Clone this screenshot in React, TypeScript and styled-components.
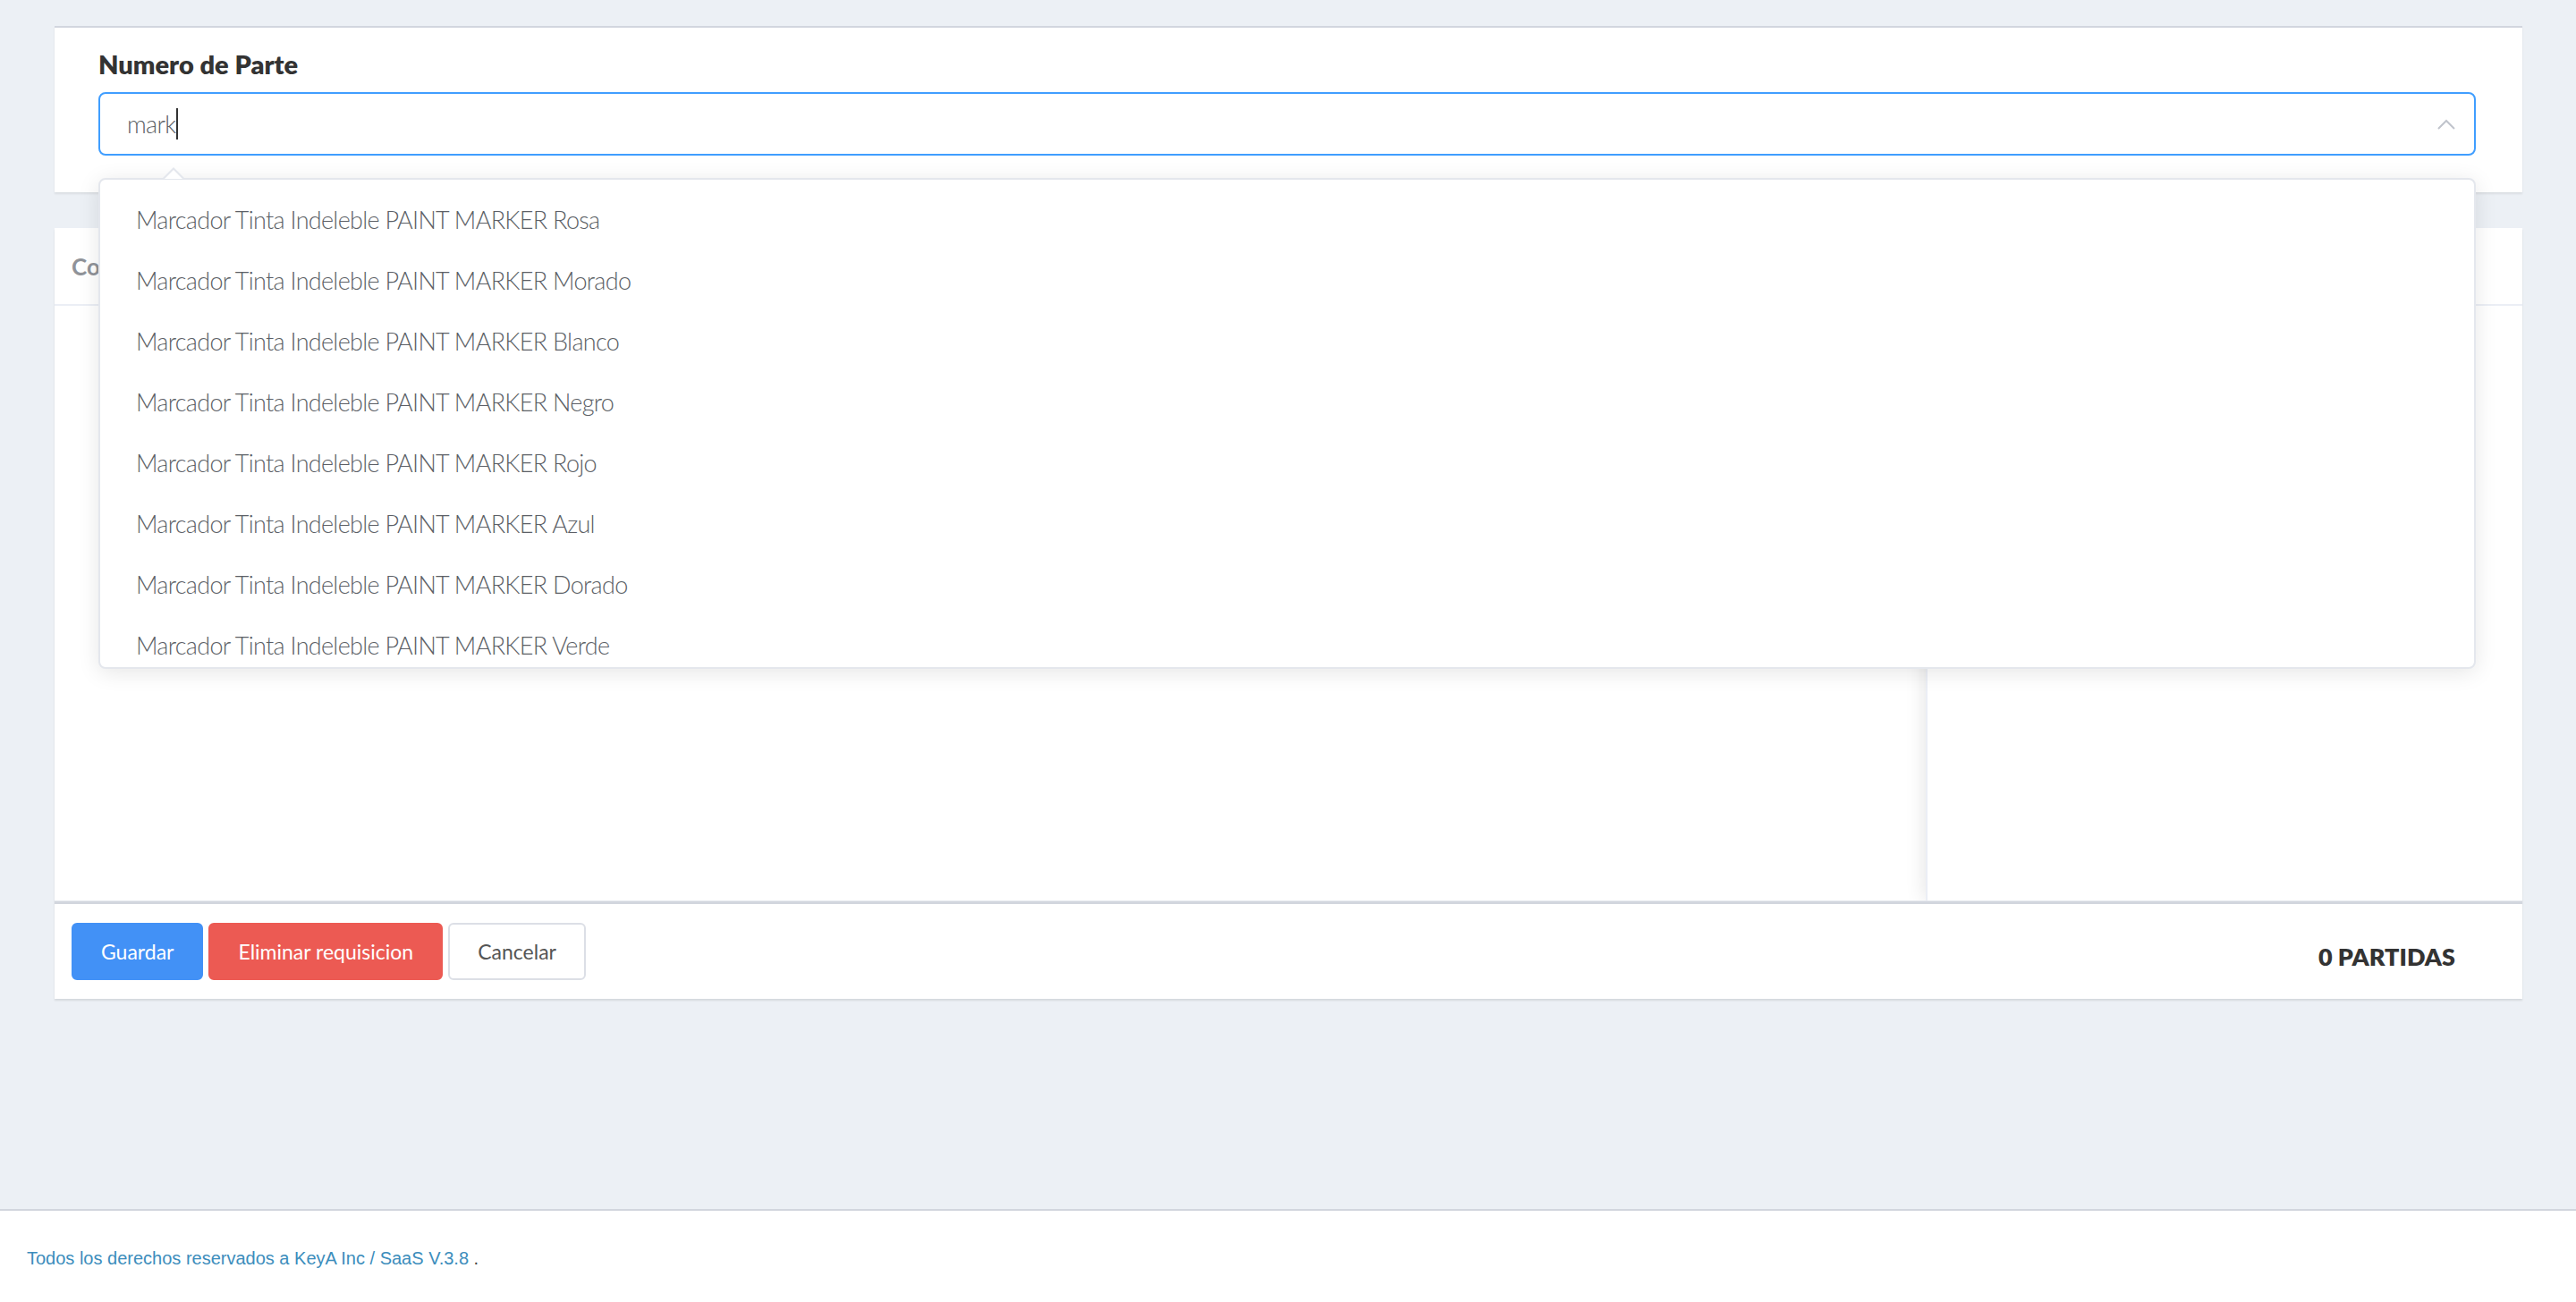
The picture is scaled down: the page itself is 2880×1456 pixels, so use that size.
import React from "react";
import styled, { createGlobalStyle } from "styled-components";

const GlobalStyle = createGlobalStyle`
  html, body { margin: 0; padding: 0; }
  body {
    background: #ecf0f5;
    font-family: Lato, "Open Sans", sans-serif;
    color: #333;
  }
  * { box-sizing: border-box; }
`;

const Page = styled.div`
  min-height: 1456px;
  display: flex;
  flex-direction: column;
`;

const Content = styled.main`
  flex: 1;
  padding: 29px 60px 0 61px;
  display: flex;
  flex-direction: column;
  gap: 40px;
`;

const SearchCard = styled.section`
  position: relative;
  z-index: 2;
  height: 186px;
  background: #fff;
  border-top: 2px solid #d2d6de;
  box-shadow: 0 2px 2px rgba(0, 0, 0, 0.08);
  padding: 21px 52px 0 49px;
`;

const FieldLabel = styled.label`
  display: block;
  font-size: 29px;
  font-weight: 800;
  line-height: 40px;
  color: #333;
  margin-bottom: 11px;
`;

const InputWrap = styled.div`
  position: relative;
`;

const InputBox = styled.div`
  height: 71px;
  border: 2px solid #409eff;
  border-radius: 8px;
  display: flex;
  align-items: center;
  padding: 0 21px 0 30px;
  background: #fff;
`;

const InputText = styled.span`
  font-size: 27px;
  font-weight: 300;
  letter-spacing: -0.7px;
  color: #5c5f66;
`;

const Caret = styled.span`
  display: inline-block;
  width: 2px;
  height: 35px;
  background: #333;
  margin-left: 1px;
`;

const Spacer = styled.span`
  flex: 1;
`;

const Dropdown = styled.div`
  position: absolute;
  top: calc(100% + 25px);
  left: 0;
  right: 0;
  background: #fff;
  border: 2px solid #e4e7ed;
  border-radius: 8px;
  box-shadow: 0 4px 24px rgba(0, 0, 0, 0.1);
`;

const PopArrow = styled.span`
  position: absolute;
  top: -14px;
  left: 70px;
  width: 0;
  height: 0;
  border-left: 12px solid transparent;
  border-right: 12px solid transparent;
  border-bottom: 12px solid #e4e7ed;

  &::after {
    content: "";
    position: absolute;
    left: -10px;
    top: 2.5px;
    width: 0;
    height: 0;
    border-left: 10px solid transparent;
    border-right: 10px solid transparent;
    border-bottom: 10px solid #fff;
  }
`;

const SuggestionList = styled.ul`
  list-style: none;
  margin: 0;
  padding: 11px 0 0;
  height: 545px;
  overflow: hidden;
  border-radius: 6px;
`;

const Suggestion = styled.li`
  height: 68px;
  line-height: 68px;
  padding: 0 40px;
  font-size: 27px;
  font-weight: 300;
  letter-spacing: -0.7px;
  color: #5c5f66;
  white-space: nowrap;
`;

const TableCard = styled.section`
  background: #fff;
  box-shadow: 0 2px 2px rgba(0, 0, 0, 0.1);
  display: flex;
  flex-direction: column;
`;

const TableArea = styled.div`
  height: 753px;
  display: grid;
  grid-template-columns: 1fr 667px;
  overflow: hidden;
  border-bottom: 1px solid #e4e7ed;
`;

const TableMain = styled.div`
  display: flex;
  flex-direction: column;
`;

const TableFixed = styled.div`
  position: relative;
  z-index: 1;
  background: #fff;
  border-left: 2px solid #ebeef5;
  box-shadow: 0 0 22px rgba(0, 0, 0, 0.12);
  display: flex;
  flex-direction: column;
`;

const HeaderRow = styled.div`
  height: 87px;
  border-bottom: 2px solid #ebeef5;
  display: flex;
  align-items: center;
  padding-left: 19px;
  font-size: 26px;
  font-weight: 700;
  color: #909399;
`;

const ActionBar = styled.div`
  height: 109px;
  border-top: 3px solid #d2d6de;
  display: flex;
  align-items: center;
  justify-content: space-between;
  padding: 0 75px 0 19px;
`;

const ButtonGroup = styled.div`
  display: flex;
  gap: 6px;
`;

type Variant = "primary" | "danger" | "default";

const Button = styled.button<{ $variant: Variant }>`
  height: 64px;
  padding: 0 31px;
  border-radius: 6px;
  font-family: Lato, "Open Sans", sans-serif;
  font-size: 23px;
  font-weight: 400;
  cursor: pointer;
  border: 2px solid
    ${(p) =>
      p.$variant === "primary"
        ? "#4291f6"
        : p.$variant === "danger"
        ? "#ec5a53"
        : "#dcdfe6"};
  background: ${(p) =>
    p.$variant === "primary"
      ? "#4291f6"
      : p.$variant === "danger"
      ? "#ec5a53"
      : "#fff"};
  color: ${(p) => (p.$variant === "default" ? "#555" : "#fff")};
`;

const PartCount = styled.div`
  font-size: 27px;
  font-weight: 800;
  color: #333;
  margin-top: 10px;
`;

const Footer = styled.footer`
  height: 104px;
  background: #fff;
  border-top: 2px solid #d2d6de;
  padding: 33px 30px 0;
  font-family: "Liberation Sans", Arial, sans-serif;
  font-size: 20px;
  line-height: 40px;
  color: #444;
`;

const FooterLink = styled.a`
  color: #3c8dbc;
  text-decoration: none;
`;

const ChevronUp = () => (
  <svg width="20" height="12" viewBox="0 0 20 12" fill="none">
    <polyline
      points="1,11 10,2 19,11"
      stroke="#c0c4cc"
      strokeWidth="2"
      strokeLinejoin="miter"
    />
  </svg>
);

const colors = ["Rosa", "Morado", "Blanco", "Negro", "Rojo", "Azul", "Dorado", "Verde"];

export default function App() {
  return (
    <Page>
      <GlobalStyle />
      <Content>
        <SearchCard>
          <FieldLabel>Numero de Parte</FieldLabel>
          <InputWrap>
            <InputBox>
              <InputText>mark</InputText>
              <Caret />
              <Spacer />
              <ChevronUp />
            </InputBox>
            <Dropdown>
              <PopArrow />
              <SuggestionList>
                {colors.map((c) => (
                  <Suggestion key={c}>Marcador Tinta Indeleble PAINT MARKER {c}</Suggestion>
                ))}
              </SuggestionList>
            </Dropdown>
          </InputWrap>
        </SearchCard>

        <TableCard>
          <TableArea>
            <TableMain>
              <HeaderRow>Codigo</HeaderRow>
            </TableMain>
            <TableFixed>
              <HeaderRow />
            </TableFixed>
          </TableArea>
          <ActionBar>
            <ButtonGroup>
              <Button $variant="primary">Guardar</Button>
              <Button $variant="danger">Eliminar requisicion</Button>
              <Button $variant="default">Cancelar</Button>
            </ButtonGroup>
            <PartCount>0 PARTIDAS</PartCount>
          </ActionBar>
        </TableCard>
      </Content>
      <Footer>
        <FooterLink href="#">Todos los derechos reservados a KeyA Inc / SaaS V.3.8</FooterLink> .
      </Footer>
    </Page>
  );
}
